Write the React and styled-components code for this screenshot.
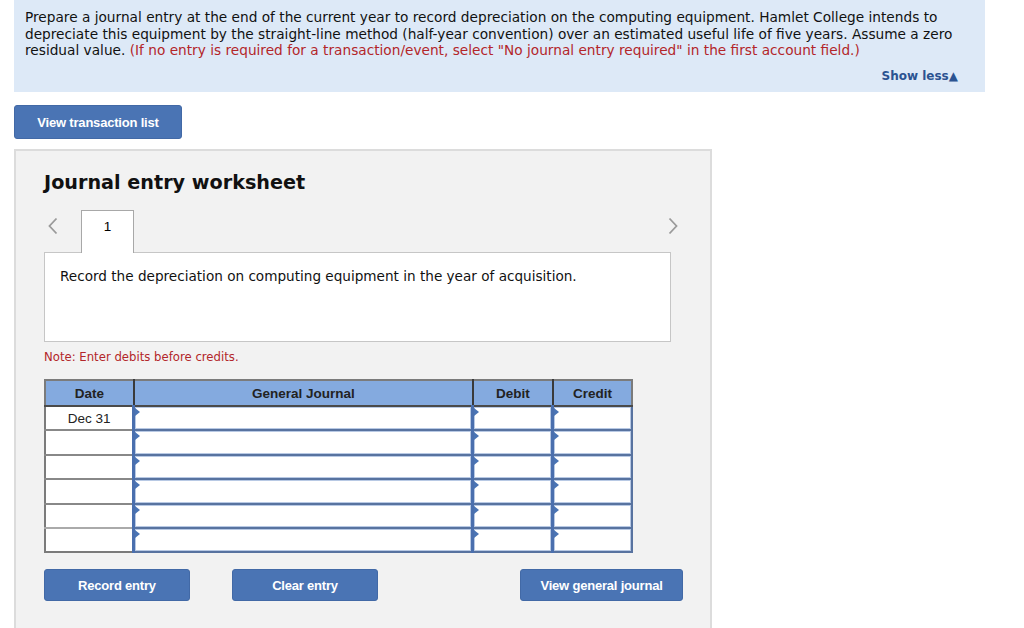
import React from 'react';
import styled, { createGlobalStyle } from 'styled-components';

const GlobalStyle = createGlobalStyle`
  body {
    margin: 0;
    background: #fff;
    font-family: "DejaVu Sans", Verdana, sans-serif;
  }
`;

const Page = styled.div`
  padding: 0 39px 0 14px;
`;

const Prompt = styled.div`
  background: #dde9f7;
  padding: 9px 11px 8px 11px;
  font-size: 13.7px;
  line-height: 16.5px;
  color: #111;
`;

const PromptText = styled.div`
  max-width: 945px;
`;

const Hint = styled.span`
  color: #b3262a;
`;

const ShowLess = styled.div`
  text-align: right;
  margin-top: 9px;
  padding-right: 16px;
  font-size: 12px;
  font-weight: bold;
  color: #2b5391;
`;

const Button = styled.button`
  height: ${(p) => p.$h || 32}px;
  width: ${(p) => p.$w}px;
  margin-left: ${(p) => p.$ml || 0}px;
  background: #4a74b4;
  border: 1px solid #4269a6;
  border-radius: 3px;
  color: #fff;
  font-family: "Liberation Sans", Arial, sans-serif;
  font-weight: bold;
  font-size: 13px;
  letter-spacing: -0.2px;
  padding: 0;
`;

const TopBar = styled.div`
  margin-top: 13px;
`;

const Panel = styled.div`
  margin-top: 10px;
  width: 666px;
  background: #f2f2f2;
  border: 2px solid #dcdcdc;
  padding: 20px 0 30px 28px;
`;

const Title = styled.h2`
  margin: 0;
  font-size: 19.2px;
  font-weight: bold;
  color: #111;
  line-height: 24px;
`;

const TabRow = styled.div`
  margin-top: 15px;
  width: 634px;
  height: 43px;
  display: flex;
  align-items: flex-start;
`;

const Arrow = styled.div`
  height: 32px;
  display: flex;
  align-items: center;
  ${(p) => (p.$right ? 'margin-left: auto; width: 10px;' : 'padding-left: 4px; width: 33px;')}
`;

const Tab = styled.div`
  width: 53px;
  height: 43px;
  background: #fff;
  border: 1px solid #a8a8a8;
  border-bottom: none;
  text-align: center;
  font-family: "Liberation Sans", Arial, sans-serif;
  font-size: 13.5px;
  padding-top: 8px;
  box-sizing: border-box;
  position: relative;
  z-index: 1;
  margin-bottom: -1px;
`;

const Description = styled.div`
  background: #fff;
  border: 1px solid #c6c6c6;
  padding: 15px 0 0 15px;
  font-size: 13.6px;
  color: #111;
  margin-top: -1px;
  width: 610px;
  height: 73px;
`;

const Note = styled.div`
  margin-top: 8px;
  font-size: 11.7px;
  color: #b3262a;
`;

const Table = styled.table`
  margin-top: 15px;
  border-collapse: collapse;
  width: 589px;
  border: 2px solid #7b7b7b;
  font-family: "Liberation Sans", Arial, sans-serif;
  font-size: 13.5px;
`;

const Th = styled.th`
  background: #84aadf;
  height: 24px;
  padding: 0;
  width: ${(p) => p.$w}px;
  border-left: 2px solid #3a3a3a;
  border-bottom: 2px solid #4a4a4a;
  color: #222;
  &:first-child {
    border-left: none;
  }
`;

const DateCell = styled.td`
  height: 22.4px;
  padding: 0;
  background: #fff;
  border-top: 2px solid ${(p) => (p.$light ? '#aaa' : '#888')};
  text-align: center;
  color: #222;
`;

const InputCell = styled.td`
  height: 22.4px;
  padding: 0;
  background: #fff;
  border: 2px solid #5873a0;
  border-left: 3px solid #4a6fae;
  box-shadow: inset 0 0 0 1px #b8c9e4;
  position: relative;
  &::before {
    content: '';
    position: absolute;
    top: 1px;
    left: 0;
    border-top: 4px solid transparent;
    border-bottom: 4px solid transparent;
    border-left: 5px solid #4a74b4;
  }
`;

const Footer = styled.div`
  margin-top: 16px;
  display: flex;
  gap: 42px;
`;

function Chevron({ right }) {
  return (
    <svg width="10" height="18" viewBox="0 0 10 18">
      <path
        d={right ? 'M1.5 1.5 L8.5 9 L1.5 16.5' : 'M8.5 1.5 L1.5 9 L8.5 16.5'}
        fill="none"
        stroke="#9a9a9a"
        strokeWidth="1.8"
      />
    </svg>
  );
}

export default function App() {
  const rows = ['Dec 31', '', '', '', '', ''];
  return (
    <Page>
      <GlobalStyle />
      <Prompt>
        <PromptText>
          Prepare a journal entry at the end of the current year to record depreciation on the computing equipment. Hamlet College intends to depreciate this equipment by the straight-line method (half-year convention) over an estimated useful life of five years. Assume a zero residual value.{' '}
          <Hint>(If no entry is required for a transaction/event, select "No journal entry required" in the first account field.)</Hint>
        </PromptText>
        <ShowLess>Show less▲</ShowLess>
      </Prompt>

      <TopBar>
        <Button $w={168} $h={34}>View transaction list</Button>
      </TopBar>

      <Panel>
        <Title>Journal entry worksheet</Title>
        <TabRow>
          <Arrow><Chevron /></Arrow>
          <Tab>1</Tab>
          <Arrow $right><Chevron right /></Arrow>
        </TabRow>
        <Description>Record the depreciation on computing equipment in the year of acquisition.</Description>
        <Note>Note: Enter debits before credits.</Note>

        <Table>
          <thead>
            <tr>
              <Th $w={88}>Date</Th>
              <Th $w={344}>General Journal</Th>
              <Th $w={79}>Debit</Th>
              <Th $w={78}>Credit</Th>
            </tr>
          </thead>
          <tbody>
            {rows.map((d, i) => (
              <tr key={i}>
                <DateCell $light={i === 5}>{d}</DateCell>
                <InputCell />
                <InputCell />
                <InputCell />
              </tr>
            ))}
          </tbody>
        </Table>

        <Footer>
          <Button $w={146}>Record entry</Button>
          <Button $w={146}>Clear entry</Button>
          <Button $w={163} $ml={100}>View general journal</Button>
        </Footer>
      </Panel>
    </Page>
  );
}
